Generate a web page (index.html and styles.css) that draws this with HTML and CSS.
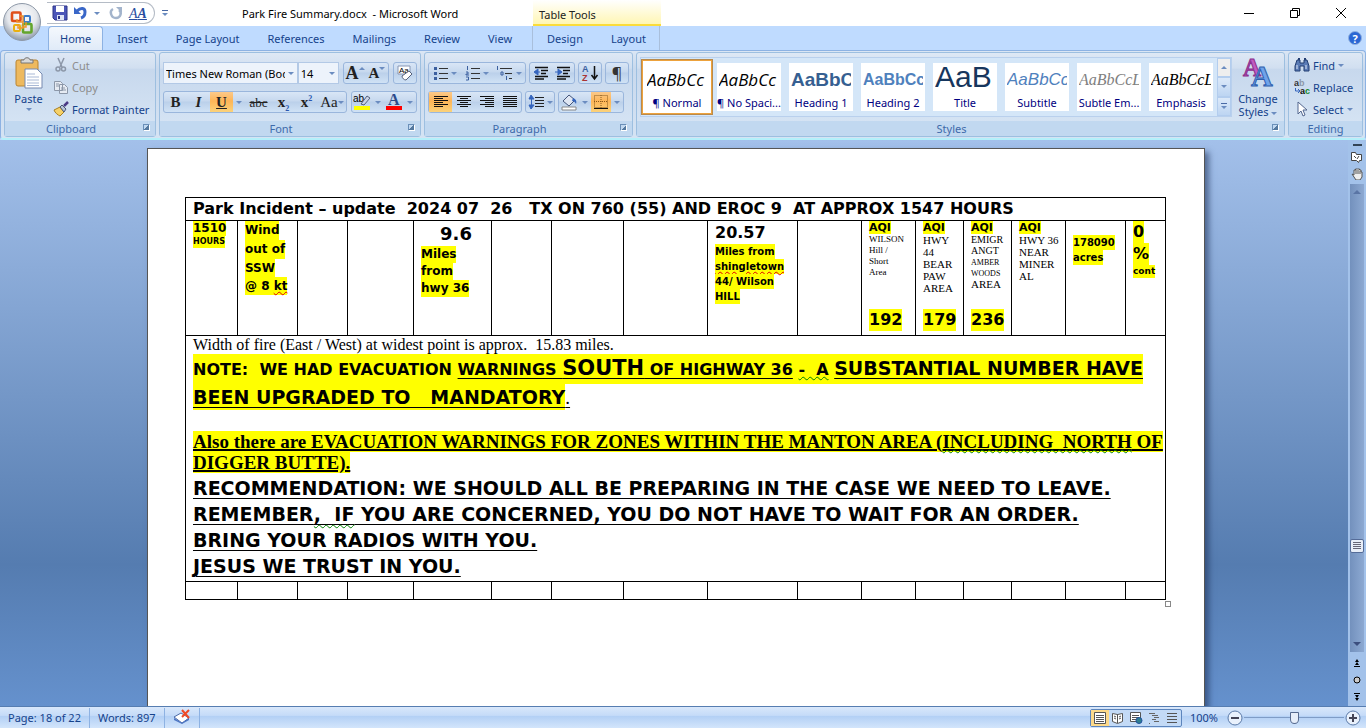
FILE: index.html
```html
<!DOCTYPE html>
<html lang="en">
<head>
    <meta charset="UTF-8">
    <meta name="viewport" content="width=device-width, initial-scale=1.0">
    <title>Park Fire Summary.docx - Microsoft Word</title>
    <link rel="stylesheet" href="styles.css">
</head>
<body>
    <header class="titlebar">
        <button class="office-btn" aria-label="Office Button">
            <svg width="40" height="40" viewBox="0 0 40 40">
                <defs>
                    <radialGradient id="orb" cx="50%" cy="35%" r="65%">
                        <stop offset="0" stop-color="#fff"/>
                        <stop offset="0.6" stop-color="#e4e7ec"/>
                        <stop offset="1" stop-color="#8d99ab"/>
                    </radialGradient>
                </defs>
                <circle cx="20" cy="20" r="18.500" fill="url(#orb)" stroke="#8e99a8"/>
                <g fill="none" stroke-width="2.600" stroke-linejoin="round">
                    <rect x="10" y="10.500" width="8.500" height="8.500" rx="1" stroke="#e0501b"/>
                    <rect x="22" y="14" width="6" height="6" rx="1" stroke="#3d7cc9" stroke-width="2"/>
                    <rect x="12" y="23" width="6" height="6" rx="1" stroke="#e9b012" stroke-width="2"/>
                    <rect x="21" y="22" width="8.500" height="8.500" rx="1" stroke="#63a52c"/>
                </g>
                <path d="M18 14h3v6h-6v-3M21 17v9h-5v-4M24 20v5h-4" fill="none" stroke="#f0952a" stroke-width="1.400"/>
            </svg>
        </button>
        <div class="quick-access">
            <button aria-label="Save">
                <svg width="16" height="16" viewBox="0 0 16 16"><path d="M1 1h14v14H3l-2-2z" fill="#4c56b8" stroke="#2c3487"/><path d="M4 1h8v6H4z" fill="#fff"/><path d="M5 10h7v5H5z" fill="#dfe5f5"/><path d="M6 11h2v3H6z" fill="#2c3487"/></svg>
            </button>
            <button aria-label="Undo">
                <svg width="16" height="16" viewBox="0 0 16 16"><path d="M4 6c4-4 8-3 8 1 0 3-1 5-4 6" fill="none" stroke="#3a67c8" stroke-width="3"/><path d="M1 2v7h7z" fill="#3a67c8"/></svg>
            </button>
            <i class="arrow"></i>
            <button aria-label="Redo">
                <svg width="16" height="16" viewBox="0 0 16 16"><path d="M5 4C1 6 3 13 8 13s6-6 3-8" fill="none" stroke="#a3b4cc" stroke-width="2.500"/><path d="M8 2h6v6z" fill="#a3b4cc"/></svg>
            </button>
            <button class="font-dialog" aria-label="Font">A<b>A</b></button>
        </div>
        <button class="qa-more" aria-label="Customize Quick Access Toolbar"><i class="bar"></i><i class="arrow"></i></button>
        <h1>Park Fire Summary.docx &nbsp;- Microsoft Word</h1>
        <div class="context-title">Table Tools</div>
        <div class="window-btns">
            <button aria-label="Minimize"><svg width="12" height="12"><path d="M1 6.500h10" stroke="#000"/></svg></button>
            <button aria-label="Restore"><svg width="12" height="12" fill="none" stroke="#000"><path d="M1.500 3.500h7v7h-7zM3.500 3V1.500h7v7H9"/></svg></button>
            <button aria-label="Close"><svg width="12" height="12"><path d="M1 1l10 10M11 1L1 11" stroke="#000"/></svg></button>
        </div>
    </header>

    <nav class="tabs">
        <a href="#" class="tab active">Home</a>
        <a href="#" class="tab">Insert</a>
        <a href="#" class="tab">Page Layout</a>
        <a href="#" class="tab">References</a>
        <a href="#" class="tab">Mailings</a>
        <a href="#" class="tab">Review</a>
        <a href="#" class="tab">View</a>
        <div class="context-tabs">
            <a href="#" class="tab">Design</a>
            <a href="#" class="tab">Layout</a>
        </div>
        <button class="help" aria-label="Help">?</button>
    </nav>

    <section class="ribbon">
        <div class="group clipboard">
            <div class="group-body">
                <button class="big-btn paste">
                    <svg width="28" height="32" viewBox="0 0 28 32"><rect x="1" y="3" width="22" height="26" rx="2" fill="#eeb95e" stroke="#b98430"/><path d="M6 6V3h3c0-3 6-3 6 0h3v3z" fill="#d9d9d9" stroke="#777"/><path d="M10 12h12l5 5v14H10z" fill="#fff" stroke="#7689b0"/><path d="M12 17h8M12 20h12M12 23h12M12 26h12M12 28.500h12" stroke="#a9b9d6"/></svg>
                    <span>Paste</span>
                    <i class="arrow"></i>
                </button>
                <div class="stack">
                    <button class="row-btn" disabled><svg width="16" height="16" viewBox="0 0 16 16" fill="none" stroke="#8c97a8" stroke-width="1.500"><path d="M5 1l4 9M11 1L7 10"/><circle cx="5" cy="12" r="2"/><circle cx="10.500" cy="12" r="2"/></svg>Cut</button>
                    <button class="row-btn" disabled><svg width="16" height="16" viewBox="0 0 16 16" fill="#e6ebf3" stroke="#8c97a8"><path d="M1.500 2.500h6l2 2v7h-8zM6.500 5.500h5l3 3v6h-8z"/><path d="M3 5h3M3 7h3M8 9h4M8 11h5"/></svg>Copy</button>
                    <button class="row-btn"><svg width="16" height="16" viewBox="0 0 16 16"><path d="M1 9l6-3 4 5-4 4c-2-1-5-3-6-6z" fill="#f6d168" stroke="#a98022"/><path d="M7 6l2-2 4 4-2 3z" fill="#b7c3d6" stroke="#4a5875"/><path d="M11 5l4-4" stroke="#4b3a86" stroke-width="2.500"/></svg>Format Painter</button>
                </div>
            </div>
            <div class="group-title has-launcher">Clipboard<i class="launcher"></i></div>
        </div>

        <div class="group font">
            <div class="group-body two-rows">
                <div class="tool-row">
                    <div class="combo font-name"><select aria-label="Font"><option>Times New Roman (Body CS)</option></select><i class="arrow"></i></div>
                    <div class="combo font-size"><select aria-label="Font Size"><option>14</option></select><i class="arrow"></i></div>
                    <div class="btn-set pair">
                        <button class="serif grow" aria-label="Grow Font">A<i class="up"></i></button>
                        <button class="serif shrink" aria-label="Shrink Font">A<i class="arrow"></i></button>
                    </div>
                    <div class="btn-set">
                        <button aria-label="Clear Formatting"><svg width="18" height="18" viewBox="0 0 18 18"><path d="M2 2h12v8H2z" fill="#fff" stroke="#8797b5"/><text x="3" y="9" font-size="8" font-family="Liberation Sans">Aa</text><path d="M6 12l7-5 3 3-6 6c-2 0-4-2-4-4z" fill="#fff" stroke="#55617c"/></svg></button>
                    </div>
                </div>
                <div class="tool-row">
                    <div class="btn-set letters">
                        <button class="serif"><b>B</b></button>
                        <button class="serif"><b><i>I</i></b></button>
                        <button class="serif on"><b><u>U</u></b></button>
                        <button class="drop" aria-label="Underline style"><i class="arrow"></i></button>
                        <button class="serif strike"><s>abc</s></button>
                        <button class="serif"><b>x<sub>2</sub></b></button>
                        <button class="serif"><b>x<sup>2</sup></b></button>
                        <button class="serif case">Aa<i class="arrow"></i></button>
                    </div>
                    <div class="btn-set colors">
                        <button aria-label="Text Highlight Color"><svg width="18" height="18" viewBox="0 0 18 18"><path d="M1 13h16v4H1z" fill="#ff0"/><text x="0" y="9" font-size="10" font-family="Liberation Sans">ab</text><path d="M8 11l6-8 3 2-6 7z" fill="#c9d4e8" stroke="#55617c"/></svg></button>
                        <button class="drop" aria-label="Highlight colors"><i class="arrow"></i></button>
                        <button aria-label="Font Color"><svg width="18" height="18" viewBox="0 0 18 18"><path d="M1 13h16v4H1z" fill="red"/><text x="3" y="12" font-size="16" font-weight="bold" font-family="Liberation Serif" fill="#2d4c8c">A</text></svg></button>
                        <button class="drop" aria-label="Font colors"><i class="arrow"></i></button>
                    </div>
                </div>
            </div>
            <div class="group-title has-launcher">Font<i class="launcher"></i></div>
        </div>

        <div class="group paragraph">
            <div class="group-body two-rows">
                <div class="tool-row">
                    <div class="btn-set lists">
                        <button aria-label="Bullets"><svg width="16" height="16" viewBox="0 0 16 16"><path d="M1 2h3v3H1zM1 7h3v3H1zM1 12h3v3H1z" fill="#3b5f9f"/><path d="M6 3.500h9M6 8.500h9M6 13.500h9" stroke="#333"/></svg><i class="arrow"></i></button>
                        <button aria-label="Numbering"><svg width="16" height="16" viewBox="0 0 16 16"><path d="M2.500 1v4M1 7h2v2H1v1h3M1 12h2.500v3H1" fill="none" stroke="#3b5f9f"/><path d="M6 3.500h9M6 8.500h9M6 13.500h9" stroke="#333"/></svg><i class="arrow"></i></button>
                        <button aria-label="Multilevel List"><svg width="18" height="16" viewBox="0 0 18 16"><path d="M1.500 1v4M5 7h2v3H5zM10.500 11v4" fill="none" stroke="#3b5f9f"/><path d="M4 3.500h12M9 8.500h7M13 13.500h3" stroke="#333"/></svg><i class="arrow"></i></button>
                    </div>
                    <div class="btn-set pair">
                        <button aria-label="Decrease Indent"><svg width="18" height="16" viewBox="0 0 18 16"><path d="M3 2.500h13M9 5.500h7M9 8.500h5M3 11.500h13M3 14h9" stroke="#111" stroke-width="1.500"/><path d="M6 4L2 7l4 3zM5 7h3" fill="#3565bd" stroke="#3565bd"/></svg></button>
                        <button aria-label="Increase Indent"><svg width="18" height="16" viewBox="0 0 18 16"><path d="M3 2.500h13M9 5.500h7M9 8.500h5M3 11.500h13M3 14h9" stroke="#111" stroke-width="1.500"/><path d="M4 4l4 3-4 3zM1 7h4" fill="#3565bd" stroke="#3565bd"/></svg></button>
                    </div>
                    <div class="btn-set">
                        <button aria-label="Sort"><svg width="18" height="18" viewBox="0 0 18 18"><text x="1" y="8" font-size="9" font-weight="bold" font-family="Liberation Sans" fill="#3b5f9f">A</text><text x="1" y="17" font-size="9" font-weight="bold" font-family="Liberation Sans" fill="#a33">Z</text><path d="M13.500 2v12M10.500 11l3 4 3-4" fill="none" stroke="#111" stroke-width="1.500"/></svg></button>
                    </div>
                    <div class="btn-set">
                        <button class="pilcrow" aria-label="Show/Hide">¶</button>
                    </div>
                </div>
                <div class="tool-row">
                    <div class="btn-set aligns">
                        <button class="on" aria-label="Align Left"><svg width="16" height="14" stroke="#111" stroke-width="1"><path d="M1 1.500h14M1 3.500h9M1 5.500h14M1 7.500h9M1 9.500h14M1 11.500h9"/></svg></button>
                        <button aria-label="Center"><svg width="16" height="14" stroke="#111"><path d="M1 1.500h14M4 3.500h8M1 5.500h14M4 7.500h8M1 9.500h14M4 11.500h8"/></svg></button>
                        <button aria-label="Align Right"><svg width="16" height="14" stroke="#111"><path d="M1 1.500h14M6 3.500h9M1 5.500h14M6 7.500h9M1 9.500h14M6 11.500h9"/></svg></button>
                        <button aria-label="Justify"><svg width="16" height="14" stroke="#111"><path d="M1 1.500h14M1 3.500h14M1 5.500h14M1 7.500h14M1 9.500h14M1 11.500h14"/></svg></button>
                    </div>
                    <div class="btn-set">
                        <button class="spacing" aria-label="Line Spacing"><svg width="17" height="16" viewBox="0 0 17 16"><path d="M7 3.500h9M7 6.500h9M7 9.500h9M7 12.500h9" stroke="#222"/><path d="M3 1L1 5h5zM3 15l-2-4h5zM3.500 4v8" fill="#3565bd" stroke="#3565bd"/></svg><i class="arrow"></i></button>
                    </div>
                    <div class="btn-set colors">
                        <button aria-label="Shading"><svg width="18" height="18" viewBox="0 0 18 18"><path d="M2 14h14v3H2z" fill="#fff" stroke="#888"/><path d="M3 8l6-6 6 5-6 6z" fill="#dfe6f3" stroke="#44557a"/><path d="M13 5c3 1 4 3 3 6-1-2-2-3-4-3z" fill="#3565bd"/></svg></button>
                        <button class="drop" aria-label="Shading colors"><i class="arrow"></i></button>
                        <button class="on" aria-label="Borders"><svg width="16" height="16" viewBox="0 0 16 16" fill="none" stroke="#8a5a1c"><path d="M1.500 1.500h13v12h-13zM8 1v13M1 7.500h14" stroke-dasharray="1 1"/><path d="M1 14.500h14" stroke="#111"/></svg></button>
                        <button class="drop" aria-label="Border styles"><i class="arrow"></i></button>
                    </div>
                </div>
            </div>
            <div class="group-title has-launcher">Paragraph<i class="launcher"></i></div>
        </div>

        <div class="group styles">
            <div class="group-body">
                <div class="gallery">
                    <button class="style-item selected"><span class="sample hand">AaBbCc</span><span class="style-name">¶ Normal</span></button>
                    <button class="style-item"><span class="sample hand">AaBbCc</span><span class="style-name">¶ No Spaci...</span></button>
                    <button class="style-item"><span class="sample heading1">AaBbC</span><span class="style-name">Heading 1</span></button>
                    <button class="style-item"><span class="sample heading2">AaBbCc</span><span class="style-name">Heading 2</span></button>
                    <button class="style-item"><span class="sample title">AaB</span><span class="style-name">Title</span></button>
                    <button class="style-item"><span class="sample subtitle">AaBbCc</span><span class="style-name">Subtitle</span></button>
                    <button class="style-item"><span class="sample subtle">AaBbCcL</span><span class="style-name">Subtle Em...</span></button>
                    <button class="style-item"><span class="sample emphasis">AaBbCcL</span><span class="style-name">Emphasis</span></button>
                    <div class="gallery-nav">
                        <button class="off" aria-label="Row up"><i class="up"></i></button>
                        <button aria-label="Row down"><i class="arrow"></i></button>
                        <button aria-label="More styles"><i class="bar"></i><i class="arrow"></i></button>
                    </div>
                </div>
                <button class="big-btn change">
                    <svg width="32" height="31" viewBox="0 0 32 31"><g font-family="Liberation Serif" font-weight="bold"><text x="1" y="19" font-size="25" fill="#c25bc0" stroke="#8b2f8d">A</text><text x="9" y="29" font-size="30" fill="#6fa3ea" stroke="#2f5fae">A</text></g></svg>
                    <span>Change<br>Styles <i class="arrow"></i></span>
                </button>
            </div>
            <div class="group-title has-launcher">Styles<i class="launcher"></i></div>
        </div>

        <div class="group editing">
            <div class="group-body">
                <div class="stack">
                    <button class="row-btn"><svg width="16" height="16" viewBox="0 0 16 16"><path d="M3 3h3v3h4V3h3l2 6v5h-5V9H6v5H1V9z" fill="#5a7bb5" stroke="#223e73"/><path d="M4 1h2v2H4zM10 1h2v2h-2z" fill="#223e73"/><path d="M3 8v4M12 8v4" stroke="#dfe9fb"/></svg>Find <i class="arrow"></i></button>
                    <button class="row-btn"><svg width="16" height="16" viewBox="0 0 16 16" font-family="Liberation Sans" font-weight="bold" font-size="9"><text x="0" y="7" fill="#333">a</text><text x="5" y="7" fill="#8c97a8">b</text><text x="6" y="15" fill="#111">a</text><text x="11" y="15" fill="#178a2c">c</text><path d="M1.500 9v3h4M4 10l2 2-2 2" fill="none" stroke="#3565bd"/></svg>Replace</button>
                    <button class="row-btn"><svg width="16" height="16" viewBox="0 0 16 16"><path d="M4 1v12l3-3 2 5 2-1-2-5h4z" fill="#fff" stroke="#53678f"/></svg>Select <i class="arrow"></i></button>
                </div>
            </div>
            <div class="group-title">Editing</div>
        </div>
    </section>

    <main class="workspace">
        <div class="canvas">
            <article class="page">
                <table class="report">
                    <colgroup>
                        <col class="w52"><col class="w60"><col class="w50"><col class="w66"><col class="w78"><col class="w60"><col class="w72"><col class="w84">
                        <col class="w90"><col class="w64"><col class="w54"><col class="w48"><col class="w48"><col class="w54"><col class="w60"><col class="w40">
                    </colgroup>
                    <tr class="head">
                        <th colspan="16">Park Incident – update &nbsp;2024 07 &nbsp;26 &nbsp; TX ON 760 (55) AND EROC 9 &nbsp;AT APPROX 1547 HOURS</th>
                    </tr>
                    <tr class="data">
                        <td class="black"><mark class="s12 h15">1510</mark><br><mark class="s8 h12">HOURS</mark></td>
                        <td class="black s12"><mark class="h19">Wind</mark><br><mark class="h19">out of</mark><br><mark class="h18">SSW</mark><br><mark class="h18">@ 8 <span class="spell">kt</span></mark></td>
                        <td></td>
                        <td></td>
                        <td class="black"><div class="big center">9.6</div><mark class="s12 h17">Miles</mark><br><mark class="s12 h17">from</mark><br><mark class="s12 h17">hwy 36</mark></td>
                        <td></td>
                        <td></td>
                        <td></td>
                        <td class="black"><div class="mid">20.57</div><mark class="s10 h15">Miles from</mark><br><mark class="s10 h15"><span class="spell">shingletown</span></mark><br><mark class="s10 h15">44/ Wilson</mark><br><mark class="s10 h15">HILL</mark></td>
                        <td></td>
                        <td class="aqi"><div class="cell"><mark class="s11 h13">AQI</mark><p class="t9">WILSON<br>Hill /<br>Short<br>Area</p><mark class="level">192</mark></div></td>
                        <td class="aqi"><div class="cell"><mark class="s11 h13">AQI</mark><p class="t11">HWY<br>44<br>BEAR<br>PAW<br>AREA</p><mark class="level">179</mark></div></td>
                        <td class="aqi"><div class="cell"><mark class="s11 h13">AQI</mark><p class="t10">EMIGR<br>ANGT<br><small>AMBER<br>WOODS</small><br><span class="t11">AREA</span></p><mark class="level">236</mark></div></td>
                        <td class="aqi"><div class="cell"><mark class="s11 h13">AQI</mark><p class="t11">HWY 36<br>NEAR<br>MINER<br>AL</p></div></td>
                        <td class="black acres"><mark class="s10 h15">178090</mark><br><mark class="s10 h15">acres</mark></td>
                        <td class="black"><mark class="s16 h22">0</mark><br><mark class="s16 h22">%</mark><br><mark class="s9 h13">cont</mark></td>
                    </tr>
                    <tr>
                        <td colspan="16" class="note">
                            <p class="width-line">Width of fire (East / West) at widest point is approx. &nbsp;15.83 miles.</p>
                            <p class="line-a"><mark>NOTE: &nbsp;WE HAD EVACUATION <u>WARNINGS <span class="south">SOUTH</span> OF HIGHWAY 36</u> <span class="grammar">- &nbsp;A</span> <u class="large">SUBSTANTIAL NUMBER HAVE</u></mark></p>
                            <p class="line-b"><mark><u>BEEN UPGRADED TO &nbsp; MANDATORY</u></mark><u class="plain">.</u></p>
                            <p class="zones"><mark>Also there are EVACUATION WARNINGS FOR ZONES WITHIN THE MANTON AREA (<span class="grammar">INCLUDING &nbsp;NORTH</span> OF</mark><br><mark>DIGGER BUTTE).</mark></p>
                            <p class="advice">RECOMMENDATION: WE SHOULD ALL BE PREPARING IN THE CASE WE NEED TO LEAVE.<br>REMEMBER<span class="grammar">, &nbsp;IF</span> YOU ARE CONCERNED, YOU DO NOT HAVE TO WAIT FOR AN ORDER.<br>BRING YOUR RADIOS WITH YOU.<br>JESUS WE TRUST IN YOU.</p>
                        </td>
                    </tr>
                    <tr class="empty"><td></td><td></td><td></td><td></td><td></td><td></td><td></td><td></td><td></td><td></td><td></td><td></td><td></td><td></td><td></td><td></td></tr>
                </table>
                <i class="resize"></i>
            </article>
        </div>
        <aside class="scrollbar">
            <i class="split"></i>
            <button aria-label="View Ruler"><svg width="12" height="12" viewBox="0 0 12 12" fill="#fff" stroke="#444"><path d="M.500 1.500h4l1 2h5v6h-2l-1 2-2-2h-5z"/><path d="M3 5l2 2M8 5L6 8"/></svg></button>
            <button aria-label="Pan"><svg width="12" height="12" viewBox="0 0 12 12"><path d="M1 6l2 1V2h1.500V1h2v0h2v1H10v2h1v5l-2 3H5z" fill="#eee" stroke="#555"/><path d="M5 2v4M7 2v4M9 3v3" stroke="#555"/></svg></button>
            <div class="track">
                <i class="up"></i>
                <div class="thumb"><i></i><i></i><i></i><i></i></div>
                <i class="arrow"></i>
            </div>
            <button aria-label="Previous Page"><svg width="8" height="8"><path d="M4 0l2 3H2zM4 3l2 3H2z" fill="#000"/><path d="M1 7.500h6" stroke="#000"/></svg></button>
            <button aria-label="Select Browse Object"><svg width="8" height="8"><circle cx="4" cy="4" r="3" fill="#ccc" stroke="#000"/></svg></button>
            <button aria-label="Next Page"><svg width="8" height="8"><path d="M4 8l2-3H2zM4 5l2-3H2z" fill="#000"/><path d="M1 .500h6" stroke="#000"/></svg></button>
        </aside>
    </main>

    <footer class="statusbar">
        <div class="status">Page: 18 of 22</div>
        <div class="status">Words: 897</div>
        <div class="status proof"><svg width="18" height="16" viewBox="0 0 18 16"><path d="M1 8l7-4 8 5-7 5z" fill="#fff" stroke="#4b6aa8"/><path d="M1 9v2l8 4 7-4V9l-7 5z" fill="#4b75c4"/><path d="M9 1l7 8M16 1l-7 7" stroke="#f04a26" stroke-width="2"/></svg></div>
        <div class="views">
            <button class="on" aria-label="Print Layout"><svg width="12" height="12"><path d="M.500.500h11v11H.500z" fill="#fff" stroke="#555"/><path d="M2 3.500h8M2 5.500h8M2 7.500h8M2 9.500h8" stroke="#555"/></svg></button>
            <button aria-label="Full Screen Reading"><svg width="12" height="12" fill="#fff" stroke="#555"><path d="M.500 1.500l5 1 5-1v8l-5 2-5-2zM5.500 2v9M2 4l2 1M2 6l2 1M7 5l2-1M7 7l2-1"/></svg></button>
            <button aria-label="Web Layout"><svg width="13" height="12"><path d="M.500.500h10v9H.500z" fill="#fff" stroke="#555"/><path d="M2 3.500h7M2 5.500h7M2 7.500h5" stroke="#555"/><circle cx="9" cy="8.500" r="3" fill="#2f7f8f" stroke="#1f4f9f"/></svg></button>
            <button aria-label="Outline"><svg width="12" height="12" stroke="#666"><path d="M1 1.500h6M4 3.500h6M6 5.500h5M4 7.500h4M6 9.500h5M1 11.500h1"/></svg></button>
            <button aria-label="Draft"><svg width="12" height="12" stroke="#555"><path d="M1 1.500h10M1 4.500h10M1 7.500h10M1 10.500h10"/></svg></button>
        </div>
        <span class="percent">100%</span>
        <button class="round" aria-label="Zoom Out"><svg width="16" height="16"><circle cx="8" cy="8" r="7" fill="#e9f1fc" stroke="#5b7aa8"/><path d="M4 8h8" stroke="#445" stroke-width="2"/></svg></button>
        <input class="zoom" type="range" min="0" max="100" value="50" aria-label="Zoom">
        <button class="round" aria-label="Zoom In"><svg width="16" height="16"><circle cx="8" cy="8" r="7" fill="#e9f1fc" stroke="#5b7aa8"/><path d="M4 8h8M8 4v8" stroke="#445" stroke-width="2"/></svg></button>
    </footer>
</body>
</html>
```
FILE: styles.css
```css
* {
    box-sizing: border-box;
}
body {
    margin: 0;
    height: 100vh;
    display: flex;
    flex-direction: column;
    overflow: hidden;
    font-family: "Noto Sans", "Open Sans", sans-serif;
    font-size: 11px;
    line-height: 13px;
    color: #15428b;
    background: #bfdbff;
}
button {
    font: inherit;
    color: inherit;
    background: none;
    border: none;
    padding: 0;
    display: flex;
    align-items: center;
    justify-content: center;
}
svg {
    display: block;
    flex: none;
}
p, h1 {
    margin: 0;
}

/* Small arrows used all over the ribbon */
.arrow, .up {
    display: inline-block;
    border: 3px solid transparent;
    border-top-color: #6b8cc0;
    border-bottom: none;
    vertical-align: middle;
    flex: none;
}
.up {
    border-top: none;
    border-bottom: 3px solid #6b8cc0;
}
.bar {
    width: 6px;
    height: 1px;
    margin-bottom: 2px;
    background: #4a6aa5;
}

/* Title bar */
.titlebar {
    position: relative;
    display: flex;
    align-items: center;
    height: 26px;
    background: #fff;
    flex: none;
}
.office-btn {
    position: absolute;
    left: 2px;
    top: 2px;
    z-index: 2;
}
.quick-access {
    display: flex;
    align-items: center;
    gap: 5px;
    width: 108px;
    height: 22px;
    margin-left: 47px;
    padding-left: 5px;
    border: 1px solid #b5bcc6;
    border-left: none;
    border-radius: 0 11px 11px 0;
}
.quick-access .arrow {
    margin-right: 3px;
}
.font-dialog {
    font-family: "Liberation Serif", serif;
    font-style: italic;
    font-size: 14px;
    color: #2a4da0;
    text-decoration: underline;
}
.qa-more {
    flex-direction: column;
    width: 20px;
}
.titlebar h1 {
    margin-left: 67px;
    width: 291px;
    font-size: 11px;
    font-weight: normal;
    color: #000;
    white-space: nowrap;
}
.context-title {
    width: 128px;
    height: 26px;
    padding: 8px 0 0 6px;
    color: #222;
    background: linear-gradient(#fff, #fff6b4);
    border-bottom: 2px solid #fbdc3a;
}
.window-btns {
    display: flex;
    gap: 34px;
    margin: 0 19px 0 auto;
}

/* Ribbon tabs */
.tabs {
    display: flex;
    align-items: center;
    height: 24px;
    padding-left: 48px;
    background: #bfdbff;
    flex: none;
}
.tab {
    color: #15428b;
    text-decoration: none;
    padding: 6px 14px 5px;
    white-space: nowrap;
}
.tab.active {
    padding: 5px 11px 6px;
    border: 1px solid #8db2e3;
    border-bottom: none;
    border-radius: 4px 4px 0 0;
    background: linear-gradient(#f4f8fd, #dfeaf8);
}
.context-tabs {
    display: flex;
    margin-left: 6px;
    height: 24px;
    width: 128px;
    border: 1px solid #a9bfdc;
    border-width: 0 1px;
}
.help {
    width: 14px;
    height: 14px;
    margin: 0 4px 0 auto;
    border: 1px solid #8fb0e0;
    border-radius: 50%;
    background: #2a66d4;
    color: #fff;
    font-weight: bold;
}

/* Ribbon */
.ribbon {
    display: flex;
    gap: 3px;
    height: 90px;
    padding: 1px 2px 1px 3px;
    border: 1px solid #8db2e3;
    border-bottom: 2px solid #b4f0fa;
    border-radius: 4px;
    background: linear-gradient(#dbe6f4, #c9d9ed 20%, #d5e3f3);
    flex: none;
}
.group {
    display: flex;
    flex-direction: column;
    border: 1px solid #9dbfe0;
    border-radius: 3px;
    background: linear-gradient(#dee8f5, #d1dff0 18%, #c7d8ed 20%, #d8e6f5);
}
.clipboard {
    width: 152px;
}
.font {
    width: 262px;
}
.paragraph {
    width: 209px;
}
.styles {
    flex: 1;
}
.editing {
    width: 75px;
}
.group-body {
    display: flex;
    flex: 1;
}
.group-title {
    position: relative;
    height: 15px;
    text-align: center;
    line-height: 15px;
    color: #3e6aaa;
    background: #c1d8f0;
}
.has-launcher {
    padding-right: 18px;
}
.launcher {
    position: absolute;
    right: 5px;
    top: 3px;
    width: 7px;
    height: 7px;
    border: 1px solid #6a8fb8;
    border-right-color: #fff;
    border-bottom-color: #fff;
    background: linear-gradient(135deg, transparent 50%, #55799f 50%);
}
.big-btn {
    flex-direction: column;
    text-align: center;
}
.paste {
    width: 47px;
    justify-content: flex-start;
    padding-top: 4px;
    gap: 3px;
}
.stack {
    display: flex;
    flex-direction: column;
    padding: 1px 0 0 1px;
}
.row-btn {
    justify-content: flex-start;
    gap: 3px;
    height: 22px;
    white-space: nowrap;
}
.row-btn:disabled {
    color: #8d8d8d;
}
.editing .stack {
    padding-left: 5px;
}
.two-rows {
    flex-direction: column;
    gap: 7px;
    padding: 9px 3px 0;
}
.tool-row {
    display: flex;
    gap: 4px;
    height: 22px;
}
.paragraph .tool-row {
    gap: 3px;
}
.btn-set {
    display: flex;
    border: 1px solid #9ab6dc;
    border-radius: 3px;
    background: linear-gradient(#d9e6f6, #c6d8ee 45%, #bbd0ea 50%, #d0e2f5);
}
.btn-set button {
    width: 22px;
    gap: 2px;
}
.btn-set .on {
    background: linear-gradient(#fbc98a, #fdb557 45%, #fbd27a);
}
.btn-set .drop {
    width: 12px;
}
.combo {
    position: relative;
    height: 22px;
}
.combo select {
    width: 100%;
    height: 22px;
    padding: 0 12px 0 2px;
    border: 1px solid #b3c9e6;
    background: #edf3fb;
    appearance: none;
    font: inherit;
    color: #000;
}
.combo .arrow {
    position: absolute;
    right: 4px;
    top: 10px;
}
.font-name {
    width: 137px;
}
.font-size {
    width: 42px;
    margin-left: -4px;
}
.serif {
    font-family: "Liberation Serif", serif;
    font-size: 15px;
    color: #222;
}
.btn-set .serif {
    gap: 0;
}
.grow {
    font-size: 18px;
    font-weight: bold;
    align-items: flex-start;
    padding-top: 4px;
}
.shrink {
    font-weight: bold;
    align-items: flex-start;
    padding-top: 4px;
}
.serif sub, .serif sup {
    font-size: 8px;
    line-height: 0;
    color: #2a57b0;
}
.letters .serif {
    width: 23px;
}
.letters .strike {
    width: 27px;
    font-size: 13px;
}
.letters .case {
    width: 28px;
}
.colors button {
    width: 20px;
}
.lists button {
    width: 32px;
}
.btn-set .spacing {
    width: 28px;
}
.aligns button {
    width: 23px;
}
.pilcrow {
    font-size: 16px;
    color: #333;
}

/* Styles gallery */
.styles .group-body {
    padding: 4px 0 0 3px;
}
.gallery {
    display: flex;
    flex: 1;
    height: 60px;
    border: 1px solid #b9d0ed;
    background: #d4e6f8;
}
.style-item {
    flex: 1;
    flex-direction: column;
    justify-content: flex-start;
    margin: 5px 4px;
    height: 48px;
    min-width: 0;
    overflow: hidden;
    background: #fff;
}
.style-item.selected {
    margin: 1px 0;
    height: 56px;
    padding: 2px;
    border: 2px solid #eda23c;
    outline: 1px solid #b98a4c;
    outline-offset: -1px;
}
.sample {
    width: 60px;
    height: 33px;
    line-height: 33px;
    font-size: 18px;
    text-align: left;
    overflow: hidden;
    color: #000;
}
.style-name {
    color: #000080;
    white-space: nowrap;
}
.hand {
    font-family: "Open Sans", sans-serif;
    font-style: italic;
    font-size: 17px;
}
.heading1, .heading2 {
    font-family: "Liberation Sans", sans-serif;
    font-weight: bold;
    color: #365f91;
}
.heading1 {
    font-size: 19px;
}
.heading2 {
    color: #4f81bd;
    font-size: 16px;
}
.sample.title {
    font-family: "Liberation Sans", sans-serif;
    font-size: 30px;
    line-height: 27px;
    color: #17365d;
}
.subtitle {
    font-family: "Liberation Sans", sans-serif;
    font-style: italic;
    font-size: 17px;
    color: #4f81bd;
}
.subtle, .emphasis {
    font-family: "Liberation Serif", serif;
    font-style: italic;
    font-size: 16px;
}
.subtle {
    color: #808080;
}
.gallery-nav {
    display: flex;
    flex-direction: column;
    width: 14px;
}
.gallery-nav button {
    flex: 1;
    flex-direction: column;
    border: 1px solid #b3cdee;
    background: linear-gradient(#dce9f9, #bdd5f2);
}
.gallery-nav .off {
    background: #eee;
}
.change {
    width: 52px;
    justify-content: flex-start;
    gap: 4px;
}

/* Document area */
.workspace {
    display: flex;
    flex: 1;
    min-height: 0;
    background: linear-gradient(#a3c0ea, #557cb0 75%, #6591cd);
}
.canvas {
    flex: 1;
    padding: 8px 0 0 4px;
    overflow: hidden;
}
.page {
    width: 1058px;
    height: 816px;
    margin: 0 auto;
    padding: 48px 37px;
    border: 1px solid #555;
    background: #fff;
    box-shadow: 4px 4px 6px rgba(30, 50, 90, 0.6);
}
.report {
    width: 981px;
    table-layout: fixed;
    border-collapse: collapse;
    font-family: "Liberation Serif", serif;
    color: #000;
}
.report td, .report th {
    border: 1px solid #000;
    padding: 0 0 0 7px;
    vertical-align: top;
    text-align: left;
    white-space: nowrap;
}
.w40 { width: 40px; }
.w48 { width: 48px; }
.w50 { width: 50px; }
.w52 { width: 52px; }
.w54 { width: 54px; }
.w60 { width: 60px; }
.w64 { width: 64px; }
.w66 { width: 66px; }
.w72 { width: 72px; }
.w78 { width: 78px; }
.w84 { width: 84px; }
.w90 { width: 90px; }
mark {
    display: inline-block;
    color: #000;
    background: #ff0;
    vertical-align: top;
}
.head th, .black, .aqi mark, .line-a, .line-b, .advice {
    font-family: "DejaVu Sans", Verdana, sans-serif;
    font-weight: bold;
}
.head th {
    height: 23px;
    font-size: 16px;
    line-height: 22px;
}
.data {
    height: 115px;
}
.black {
    line-height: 0;
}
.s8 { font-size: 8px; }
.s9 { font-size: 9px; }
.s10 { font-size: 10px; }
.s11 { font-size: 11px; }
.s12 { font-size: 12px; }
.s16 { font-size: 16px; }
.h12 { line-height: 12px; }
.h13 { line-height: 13px; }
.h15 { line-height: 15px; }
.h17 { line-height: 17px; }
.h18 { line-height: 18px; }
.h19 { line-height: 19px; }
.h22 { line-height: 22px; }
.big {
    font-size: 18px;
    line-height: 25px;
}
.mid {
    font-size: 16px;
    line-height: 23px;
}
.center {
    text-align: center;
}
.cell {
    display: flex;
    flex-direction: column;
    align-items: flex-start;
    height: 113px;
}
.t9 {
    font-size: 9px;
    line-height: 11px;
}
.t10 {
    font-size: 10px;
    line-height: 11px;
}
.t11 {
    font-size: 11px;
    line-height: 12px;
}
.t10 small {
    font-size: 8px;
    line-height: 9px;
}
.aqi .level {
    margin: auto 0 3px;
    font-size: 16px;
    line-height: 22px;
}
.report .acres {
    padding-top: 14px;
}
.report u, .advice {
    text-decoration: underline 1px;
    text-underline-offset: 3px;
}
.report .spell {
    text-decoration: underline wavy #e00000 1px;
}
.report .grammar {
    text-decoration: underline wavy #008000 1px;
}
.note {
    height: 246px;
}
.width-line {
    font-size: 16px;
    line-height: 18px;
}
.line-a {
    height: 30px;
    font-size: 16px;
    line-height: 29px;
}
.south {
    font-size: 21px;
}
.large {
    font-size: 19px;
}
.line-b {
    height: 27px;
    font-size: 19px;
    line-height: 26px;
}
.plain {
    font-family: "Liberation Serif", serif;
    font-weight: normal;
}
.zones {
    padding-top: 20px;
    font-size: 19px;
    line-height: 21px;
    font-weight: bold;
}
.zones mark {
    text-decoration: underline 2px;
}
.advice {
    padding-top: 2px;
    font-size: 19px;
    line-height: 26px;
}
.empty td {
    height: 18px;
}
.resize {
    display: block;
    width: 6px;
    height: 6px;
    margin: 1px -4px 0 auto;
    border: 1px solid #888;
}

/* Scroll bar */
.scrollbar {
    display: flex;
    flex-direction: column;
    align-items: center;
    width: 18px;
    padding: 4px 0 3px;
    gap: 4px;
    background: #a3c2ea;
}
.split {
    width: 9px;
    height: 2px;
    background: #345;
}
.track {
    display: flex;
    flex-direction: column;
    align-items: center;
    justify-content: space-between;
    flex: 1;
    width: 14px;
    padding: 6px 0;
    background: linear-gradient(90deg, #7391bd, #8da9d2);
}
.track .arrow {
    border-top-color: #3c4f7e;
    border-width: 4px 4px 0;
}
.track .up {
    border-bottom-color: #5a75a5;
    border-width: 0 4px 4px;
}
.thumb {
    width: 14px;
    height: 14px;
    margin-top: 256px;
    padding: 2px;
    border: 1px solid #556c98;
    border-radius: 2px;
    background: #e8eef8;
}
.thumb i {
    display: block;
    height: 1px;
    margin-bottom: 1px;
    background: #667;
}
.scrollbar > button {
    height: 13px;
}

/* Status bar */
.statusbar {
    display: flex;
    align-items: center;
    height: 22px;
    padding-right: 4px;
    border-top: 1px solid #567db1;
    background: linear-gradient(#d9e8fb, #c5dbf8 40%, #b3d0f5 45%, #d3e5fb);
    flex: none;
}
.status {
    height: 20px;
    padding: 3px 8px;
    border-right: 1px solid #8db2e3;
}
.proof {
    padding: 1px 8px;
}
.views {
    display: flex;
    margin-left: auto;
    height: 18px;
    border: 1px solid #5c85bd;
    border-radius: 2px;
    background: #c3daf6;
}
.views button {
    width: 18px;
}
.views .on {
    background: #fcd98a;
}
.percent {
    width: 44px;
    text-align: center;
}
.zoom {
    appearance: none;
    width: 100px;
    height: 16px;
    margin: 0;
    background: linear-gradient(transparent 7px, #7f9cc6 7px, #7f9cc6 8px, transparent 8px);
}
.zoom::-webkit-slider-thumb {
    appearance: none;
    width: 9px;
    height: 12px;
    border: 1px solid #55698f;
    border-radius: 1px 1px 5px 5px;
    background: #e6eefa;
}
.round {
    margin: 0 1px;
}
```
